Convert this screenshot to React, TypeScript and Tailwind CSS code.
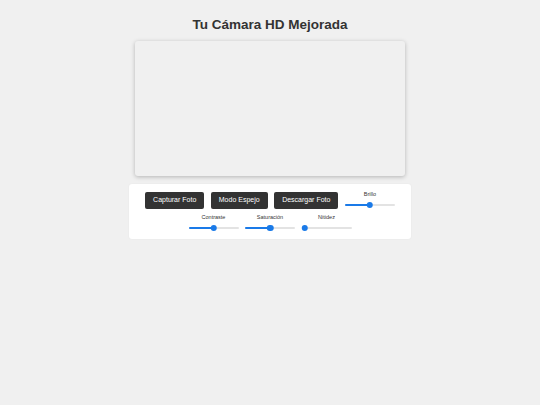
const Slider = ({ label, value }: { label: string; value: number }) => {
  return (
    <div className="flex flex-col items-center gap-[3px]">
      <span className="text-[5.5px] leading-[7px] text-[#333]">{label}</span>
      <div className="relative flex h-[8px] w-[50px] items-center">
        <div className="h-[2.5px] w-full rounded-full bg-[#e3e3e3]" />
        <div
          className="absolute left-0 h-[2.5px] rounded-full bg-[#1a7ae8]"
          style={{ width: `${value}%` }}
        />
        <div
          className="absolute h-[6.5px] w-[6.5px] -translate-x-1/2 rounded-full bg-[#1a7ae8]"
          style={{ left: `calc(3.25px + ${value / 100} * (100% - 6.5px))` }}
        />
      </div>
    </div>
  );
};

const Button = ({ children }: { children: string }) => {
  return (
    <button className="h-[17px] rounded-[2px] bg-[#333] px-[8px] text-[7px] text-white">
      {children}
    </button>
  );
};

export default function App() {
  return (
    <div
      className="min-h-[405px] bg-[#f0f0f0] text-[#333]"
      style={{ fontFamily: '"Liberation Sans", Arial, sans-serif' }}
    >
      <div className="flex flex-col items-center pt-[16px]">
        <h1 className="text-[13.5px] font-bold leading-[17px]">Tu Cámara HD Mejorada</h1>
        <div className="mt-[8px] h-[135px] w-[270px] rounded-[3px] bg-[#f0f0f0] shadow-[0_1px_4px_rgba(0,0,0,0.25)]" />
        <div className="mt-[8px] flex w-[282px] flex-wrap items-center justify-center gap-x-[6.5px] gap-y-[5px] rounded-[3px] bg-white px-[8px] pb-[7px] pt-[7px] shadow-[0_0_2px_rgba(0,0,0,0.05)]">
          <Button>Capturar Foto</Button>
          <Button>Modo Espejo</Button>
          <Button>Descargar Foto</Button>
          <Slider label="Brillo" value={50} />
          <Slider label="Contraste" value={50} />
          <Slider label="Saturación" value={50} />
          <Slider label="Nitidez" value={0} />
        </div>
      </div>
    </div>
  );
}
